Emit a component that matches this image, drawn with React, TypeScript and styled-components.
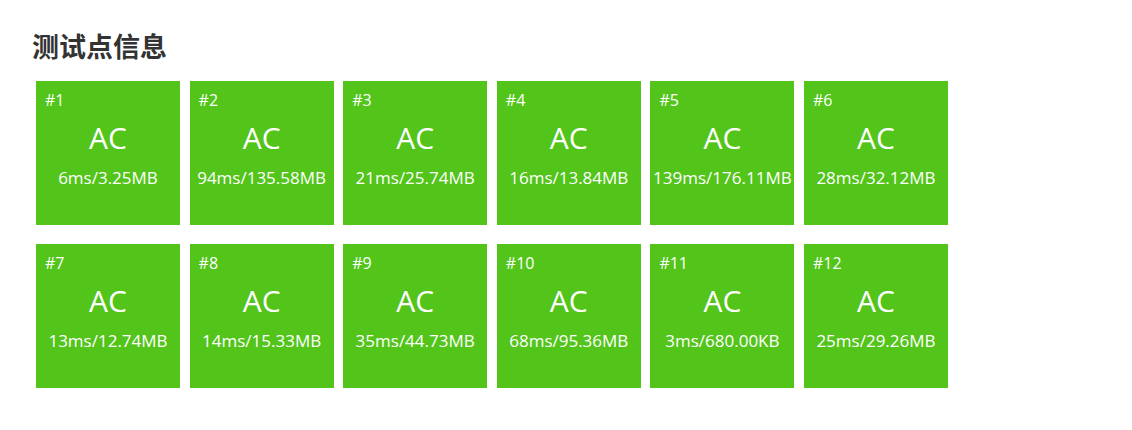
import React from "react";
import styled, { createGlobalStyle } from "styled-components";

const GlobalStyle = createGlobalStyle`
  body {
    margin: 0;
    background: #fff;
    font-family: "Open Sans", "Noto Sans CJK SC", sans-serif;
  }
`;

const cases = [
  "6ms/3.25MB",
  "94ms/135.58MB",
  "21ms/25.74MB",
  "16ms/13.84MB",
  "139ms/176.11MB",
  "28ms/32.12MB",
  "13ms/12.74MB",
  "14ms/15.33MB",
  "35ms/44.73MB",
  "68ms/95.36MB",
  "3ms/680.00KB",
  "25ms/29.26MB",
];

function App() {
  return (
    <>
      <GlobalStyle />
      <StyledPage>
        <StyledTitle>测试点信息</StyledTitle>
        <StyledGrid>
          {cases.map((usage, i) => (
            <StyledCase key={i} $status="AC">
              <StyledCaseId>#{i + 1}</StyledCaseId>
              <StyledVerdict>AC</StyledVerdict>
              <StyledUsage>{usage}</StyledUsage>
            </StyledCase>
          ))}
        </StyledGrid>
      </StyledPage>
    </>
  );
}

const StyledPage = styled.div`
  padding: 28px 32px;
`;

const StyledTitle = styled.h2`
  margin: 0 0 17px;
  font-family: "Noto Sans CJK SC", sans-serif;
  font-size: 27px;
  line-height: 36px;
  font-weight: 700;
  color: #333;
`;

const StyledGrid = styled.div`
  display: flex;
  flex-wrap: wrap;
  width: 921.6px;
  column-gap: 9.6px;
  row-gap: 19px;
  padding-left: 4px;
`;

const StyledCase = styled.div<{ $status: string }>`
  position: relative;
  box-sizing: border-box;
  width: 144px;
  height: 144px;
  padding-top: 36px;
  display: flex;
  flex-direction: column;
  align-items: center;
  background: ${(p) => (p.$status === "AC" ? "#52c41a" : "#f5222d")};
  color: #fff;
`;

const StyledCaseId = styled.span`
  position: absolute;
  top: 8px;
  left: 9px;
  font-size: 16px;
  line-height: 22px;
`;

const StyledVerdict = styled.div`
  font-size: 30px;
  line-height: 42px;
`;

const StyledUsage = styled.div`
  margin-top: 8px;
  font-size: 17px;
  line-height: 22px;
  white-space: nowrap;
`;

export default App;
